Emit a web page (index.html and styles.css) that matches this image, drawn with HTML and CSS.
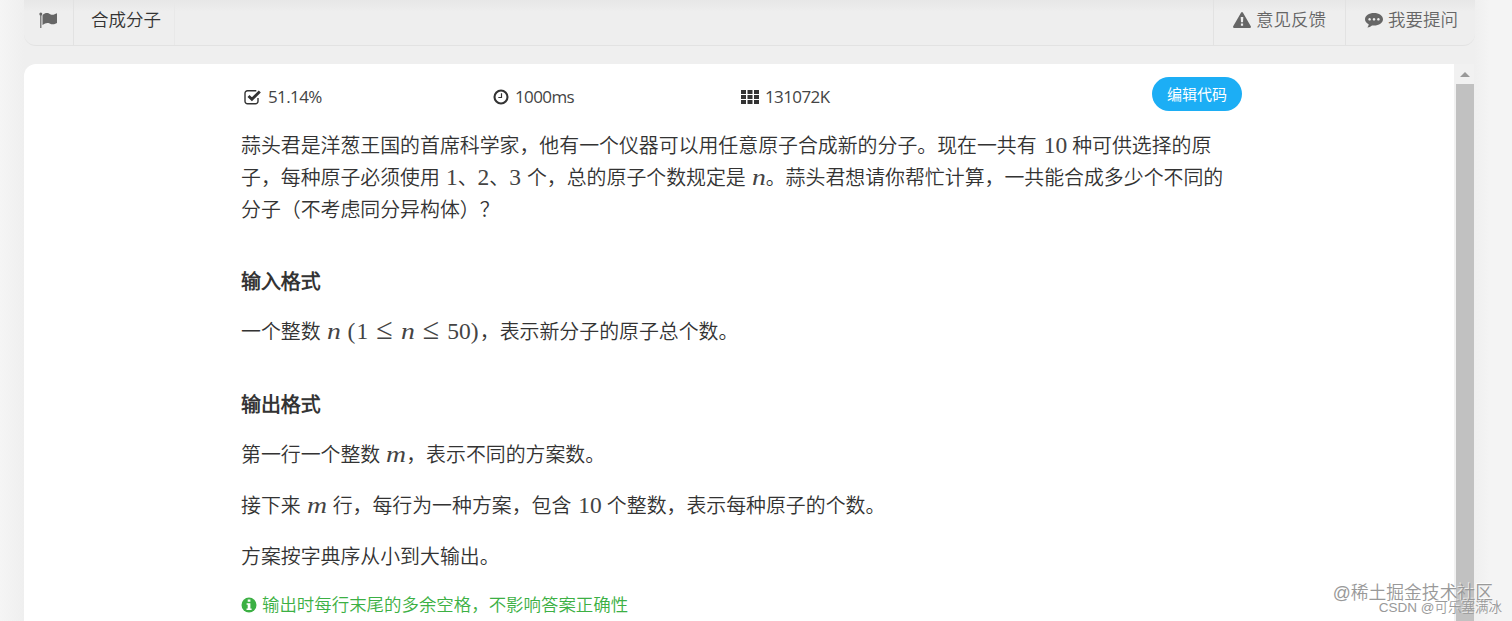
FILE: index.html
```html
<!DOCTYPE html>
<html lang="zh-CN">
<head>
    <meta charset="UTF-8">
    <meta name="viewport" content="width=device-width, initial-scale=1.0">
    <title>合成分子</title>
    <link rel="stylesheet" href="styles.css">
</head>
<body>
    <!-- Top bar -->
    <nav class="navbar">
        <div class="nav-flag">
            <svg width="19" height="17" viewBox="0 0 19 17"><circle cx="1.8" cy="2" r="1.5"/><path d="M1.2 2h1.2v14H1.2z"/><path d="M3.5 3.200C7-.1 9.200 1.300 11.200 2.200c2.500 1.100 4.200.2 6.800-1V11c-3.100 1.900-5 1.500-7.400.4-2.400-1-4.500-.3-7.100 1.500z"/></svg>
        </div>
        <div class="nav-title">合成分子</div>
        <div class="nav-link nav-feedback">
            <svg width="18" height="16" viewBox="0 0 18 16"><path fill-rule="evenodd" d="M8 .7q1-1.400 2 0l7.800 13.600q.5 1.500-1 1.700H1.200q-1.500-.2-1-1.700zM7.700 5l.3 5.300h2L10.300 5zM7.900 11.600v2.200h2.200v-2.200z"/></svg>
            <span>意见反馈</span>
        </div>
        <div class="nav-link nav-ask">
            <svg width="18" height="16" viewBox="0 0 18 16"><path fill-rule="evenodd" d="M9 1c5 0 9 2.700 9 6.300s-4 6.300-9 6.300q-1 0-2-.2-2 1.700-4.700 2.100 1.300-1.500 1.400-3.200Q0 10.300 0 7.300C0 3.700 4 1 9 1zM4.600 6a1.300 1.300 0 1 0 .01 0zM9 6a1.300 1.300 0 1 0 .01 0zM13.400 6a1.300 1.300 0 1 0 .01 0z"/></svg>
            <span>我要提问</span>
        </div>
    </nav>

    <main class="main">
        <div class="card">
            <div class="content">
                <div class="stats">
                    <div class="stat">
                        <svg width="18" height="16" viewBox="0 0 18 16"><path class="line" d="M14 9v3.200a2.500 2.500 0 0 1-2.500 2.500h-8A2.500 2.500 0 0 1 1 12.200V4.300a2.500 2.500 0 0 1 2.500-2.500h8.800" stroke-width="1.400"/><path class="line" d="M4.500 7l3.400 3.300L15.800 2.500" stroke-width="2.900"/></svg>
                        <span>51.14%</span>
                    </div>
                    <div class="stat">
                        <svg width="17" height="16" viewBox="0 0 17 16"><circle class="line" cx="9" cy="8" r="6.500" stroke-width="2.100"/><path class="line" d="M9.500 4.200v4.300H6.300" stroke-width="1.200"/></svg>
                        <span>1000ms</span>
                    </div>
                    <div class="stat">
                        <svg width="19" height="16" viewBox="0 0 19 16"><path d="M1 1h5v4H1zM7.500 1h5v4h-5zM14 1h5v4h-5zM1 6h5v4H1zM7.500 6h5v4h-5zM14 6h5v4h-5zM1 11h5v4H1zM7.500 11h5v4h-5zM14 11h5v4h-5z"/></svg>
                        <span>131072K</span>
                    </div>
                    <button class="edit-btn">编辑代码</button>
                </div>

                <p class="desc">蒜头君是洋葱王国的首席科学家，他有一个仪器可以用任意原子合成新的分子。现在一共有<span class="num">10</span>种可供选择的原<br>子，每种原子必须使用<span class="num first">1</span>、<span class="num tight">2</span>、<span class="num last">3</span>个，总的原子个数规定是<span class="var n end">n</span>。蒜头君想请你帮忙计算，一共能合成多少个不同的<br>分子（不考虑同分异构体）？</p>

                <h4>输入格式</h4>
                <p>一个整数<span class="var n">n</span><span class="math"><i class="paren">(</i>1<i class="rel">≤</i><i class="in">n</i><i class="rel">≤</i>50<i class="paren">)</i></span>，表示新分子的原子总个数。</p>

                <h4>输出格式</h4>
                <p>第一行一个整数<span class="var m end">m</span>，表示不同的方案数。</p>
                <p>接下来<span class="var m">m</span>行，每行为一种方案，包含<span class="num">10</span>个整数，表示每种原子的个数。</p>
                <p>方案按字典序从小到大输出。</p>

                <div class="hint">
                    <svg width="16" height="16" viewBox="0 0 16 16"><circle cx="8" cy="8" r="7.500"/><path fill="#fff" d="M6.700 2.600h2.700v2.200H6.700zM5.600 6.200h3.800v5.200h1.200V13H5.500v-1.600h1.200V7.700H5.600z"/></svg>
                    <span>输出时每行末尾的多余空格，不影响答案正确性</span>
                </div>
            </div>
        </div>
        <div class="scrollbar">
            <div class="arrow"></div>
            <div class="thumb"></div>
        </div>
    </main>

    <!-- Watermarks -->
    <div class="mark mark-big">@稀土掘金技术社区</div>
    <div class="mark mark-small">CSDN @可乐塞满冰</div>
</body>
</html>
```

FILE: styles.css
```css
* {
    box-sizing: border-box;
}
body {
    margin: 0;
    height: 621px;
    overflow: hidden;
    position: relative;
    background: linear-gradient(90deg, #f5f5f5 0, #efefef 24px, #efefef 1474px, #f4f4f4 1490px);
    font-family: "Open Sans", "Noto Sans CJK SC DemiLight", "Noto Sans CJK SC", sans-serif;
    font-size: 19.9px;
    font-weight: 350;
    color: #333;
}
svg {
    display: block;
    flex: none;
    fill: currentColor;
}
.line {
    fill: none;
    stroke: currentColor;
}
.navbar {
    display: flex;
    height: 46px;
    margin: 0 37px 0 24px;
    border-bottom: 1px solid #e2e2e2;
    border-radius: 0 0 12px 12px;
    background: linear-gradient(#e7e7e7, #eee 12px);
    font-size: 17.5px;
    line-height: 39px;
    color: #666;
}
.nav-flag {
    width: 50px;
    padding: 12px 0 0 15px;
    border-right: 1px solid #e2e2e2;
}
.nav-title {
    width: 101px;
    padding-left: 17px;
    border-right: 1px solid #e8e8e8;
    color: #333;
}
.nav-link {
    display: flex;
    gap: 5px;
    border-left: 1px solid #e2e2e2;
}
.nav-link svg {
    margin-top: 12px;
}
.nav-feedback {
    width: 132px;
    margin-left: auto;
    padding-left: 19px;
}
.nav-ask {
    width: 130px;
    padding-left: 19px;
}
.main {
    display: flex;
    height: 557px;
    margin: 18px 38px 0 24px;
}
.card {
    flex: 1;
    padding-left: 217px;
    background: #fff;
    border-radius: 12px 0 0 0;
}
.content {
    width: 1001px;
}
.stats {
    display: flex;
    height: 66px;
    padding-top: 13px;
}
.stat {
    display: flex;
    gap: 6px;
    width: 248px;
    padding-left: 3px;
    font-size: 17px;
    font-weight: 400;
    line-height: 40px;
    letter-spacing: -0.6px;
}
.stat span {
    color: #444;
}
.stat svg {
    margin-top: 12px;
}
.edit-btn {
    width: 90px;
    height: 34px;
    margin-left: auto;
    padding: 0;
    border: none;
    border-radius: 17px;
    background: #1caef5;
    color: #fff;
    font: 400 15px/34px "Noto Sans CJK SC", sans-serif;
}
p {
    margin: 0 0 19px;
    line-height: 32px;
    white-space: nowrap;
}
.desc {
    margin-bottom: 40px;
}
h4 {
    margin: 0 0 18px;
    font-size: 19.9px;
    font-weight: 700;
    line-height: 32px;
}
h4:not(:first-of-type) {
    margin-top: 41px;
}
/* Math */
.num, .var, .math {
    display: inline-block;
    font: 23.5px/24px "Liberation Serif", serif;
    color: #444;
}
.num {
    margin: 0 5px 0 7px;
}
.num.first {
    margin: 0 0 0 6px;
}
.num.tight {
    margin: 0;
}
.num.last {
    margin: 0 6px 0 0;
}
.var, .in {
    font-style: italic;
    transform: scaleX(1.18);
    transform-origin: left;
}
.var {
    margin: 0 6px;
}
.var.end {
    margin-right: 0;
}
.n {
    width: 14px;
}
.m {
    width: 20px;
}
.math {
    margin-left: 1px;
}
.paren {
    display: inline-block;
    width: 9px;
    font-style: normal;
}
.rel {
    display: inline-block;
    width: 32.5px;
    font-style: normal;
    font-size: 30px;
    text-align: center;
}
.in {
    display: inline-block;
    width: 14px;
}
.hint {
    display: flex;
    gap: 5px;
    font-size: 17.45px;
    line-height: 29px;
    color: #3cb044;
    margin-top: -2px;
}
.hint svg {
    margin-top: 7px;
}
.scrollbar {
    display: flex;
    flex-direction: column;
    align-items: flex-end;
    width: 20px;
    background: #f1f1f1;
}
.arrow {
    margin: 8px 4px 7px;
    border: 5px solid transparent;
    border-top: none;
    border-bottom-color: #999;
}
.thumb {
    width: 18px;
    flex: 1;
    background: #c1c1c1;
}
.mark {
    position: absolute;
    white-space: nowrap;
    font-family: "Liberation Sans", "Noto Sans CJK SC", sans-serif;
    color: #999;
    text-shadow: -1px -1px 0 #ffffffb0;
}
.mark-big {
    right: 19px;
    top: 580px;
    font-size: 17.8px;
    line-height: 26px;
}
.mark-small {
    right: 10px;
    top: 598px;
    font-size: 13.5px;
    line-height: 20px;
}
```
